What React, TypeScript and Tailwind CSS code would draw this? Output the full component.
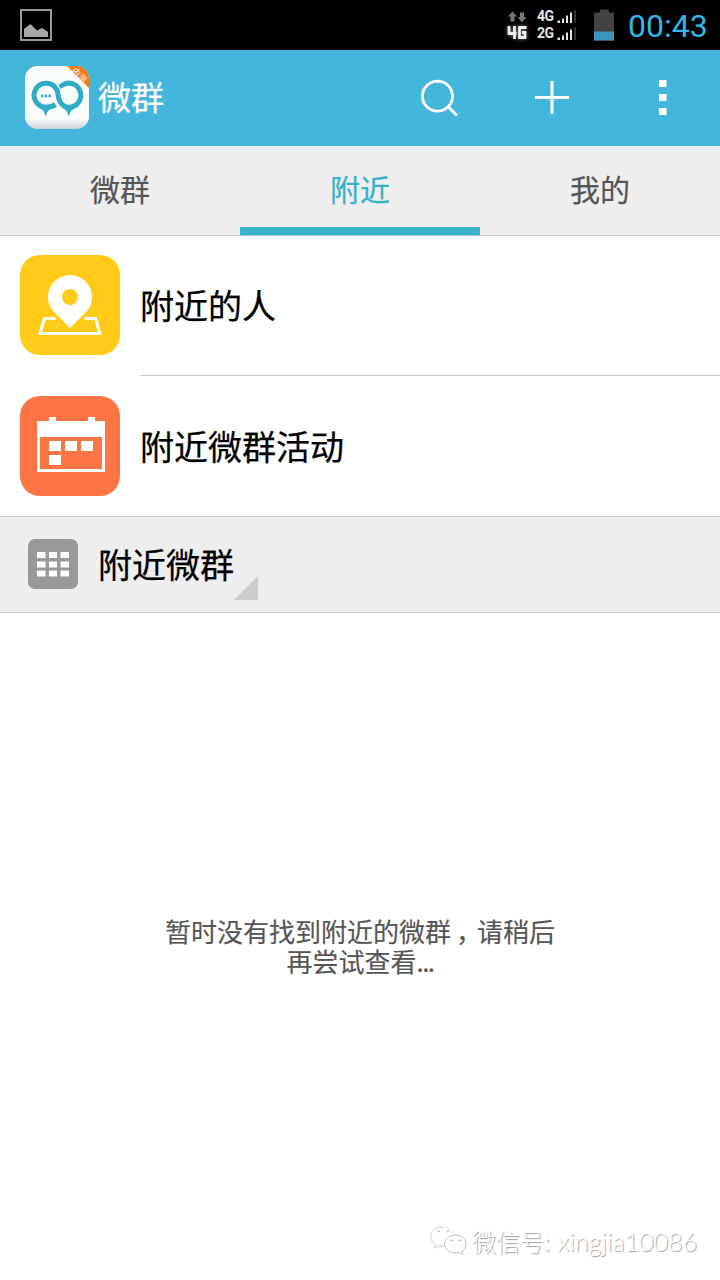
import type { ReactNode } from 'react';

const cjk = "font-['Noto_Sans_CJK_SC',sans-serif]";

function SignalBars() {
    return (
        <svg className="h-[14px] w-5" viewBox="0 0 20 14" fill="#e6e6e6">
            <rect x="0.500" y="10.500" width="2.500" height="2.500" />
            <rect x="5" y="8.500" width="2" height="4.500" />
            <rect x="9" y="5.500" width="2" height="7.500" />
            <rect x="13" y="2.500" width="2" height="10.500" />
            <rect x="17.500" y="0" width="1.200" height="13" fill="#555" />
        </svg>
    );
}

function StatusBar() {
    return (
        <div className="flex h-[50px] items-center bg-black pl-5 pr-3">
            <svg className="h-8 w-8" viewBox="0 0 32 32">
                <rect x="1" y="1" width="30" height="30" fill="none" stroke="#999" strokeWidth="2" />
                <path d="M4 28V20L10.500 15L17 21.500L22 19L28 23V28Z" fill="#a8a8a8" />
            </svg>
            <div className="ml-auto flex items-center">
                <div className="flex w-[22px] flex-col items-center">
                    <svg className="h-3 w-5" viewBox="0 0 20 12" fill="#777">
                        <path d="M5.500 0.500L10 5.500H7.500V10.500H3.500V5.500H1ZM13 1.500H17V6H19.500L15 11.500L10.500 6H13Z" />
                    </svg>
                    <svg className="mt-0.5 h-[15px] w-5 drop-shadow-[0_0_2px_#777]" viewBox="0 0 20 15" fill="none" stroke="#eee" strokeWidth="2.800">
                        <path d="M2 1V8.500H9.500M7.500 1V14M19.500 2.500H12.500V12.500H18V7.500H15" />
                    </svg>
                </div>
                <div className="ml-[9px] flex flex-col font-['Roboto',sans-serif] text-[14px] font-bold leading-[17px] text-[#e6e6e6]">
                    <div className="flex items-center"><span className="w-[20px] tracking-[-0.5px]">4G</span><SignalBars /></div>
                    <div className="flex items-center"><span className="w-[20px] tracking-[-0.5px]">2G</span><SignalBars /></div>
                </div>
                <svg className="ml-[17px] h-8 w-5" viewBox="0 0 20 32">
                    <path d="M0 3.500H6V0.500H15V3.500H20V31.500H0Z" fill="#424242" />
                    <rect y="22.500" width="20" height="9" fill="#3a96bd" />
                </svg>
                <span className="ml-[14px] w-20 whitespace-nowrap pt-[3px] font-['Roboto',sans-serif] text-[32px] leading-[47px] text-[#33b5e5]">00:43</span>
            </div>
        </div>
    );
}

function Logo() {
    return (
        <svg className="h-16 w-16" viewBox="0 0 64 64">
            <defs>
                <linearGradient id="logo-bg" x1="0" y1="0" x2="0" y2="1">
                    <stop offset="0.84" stopColor="#f8fcff" />
                    <stop offset="1" stopColor="#c9d3d6" />
                </linearGradient>
                <clipPath id="logo-clip"><rect y="0" width="64" height="63" rx="12.500" /></clipPath>
            </defs>
            <g clipPath="url(#logo-clip)">
                <rect width="64" height="63" fill="url(#logo-bg)" />
                <path d="M42 0H64V22Z" fill="#f9770e" />
                <text x="54" y="12" transform="rotate(45 54 9.500)" textAnchor="middle" fontSize="8.500" fill="#fff" className="font-['Noto_Sans_CJK_SC',sans-serif]">内测</text>
            </g>
            <path d="M30.500 38.700C27 41 23 41.200 20.800 41.200A12 12 0 1 1 31.500 23.200C34 27.500 32.500 31 34.800 35C36.800 39.500 40 41.200 43.800 41.200A12 12 0 1 0 37.500 19L34.500 21" fill="none" stroke="#30acc5" strokeWidth="5" strokeLinejoin="round" />
            <path d="M13.500 41.500Q19 43 20.700 50.500Q22.500 43 28.500 41.500ZM36.500 41.500Q42 43 43.800 50.500Q45.500 43 51 41.500Z" fill="#30acc5" />
            <g fill="#30acc5">
                <circle cx="17.300" cy="30" r="1.400" />
                <circle cx="21" cy="30" r="1.400" />
                <circle cx="24.700" cy="30" r="1.400" />
            </g>
        </svg>
    );
}

function AppBar() {
    return (
        <header className="flex h-24 items-center bg-[#45b6db] pl-[25px] pr-[53px]">
            <Logo />
            <h1 className={`ml-[9px] pb-[5px] text-[33px] leading-[48px] text-white [-webkit-text-stroke:0.2px] ${cjk}`}>微群</h1>
            <div className="ml-auto flex items-center">
                <svg className="h-10 w-10" viewBox="0 0 40 40" fill="none" stroke="#fff" strokeWidth="2.800">
                    <circle cx="17.500" cy="18.200" r="15" />
                    <path d="M28 28.500L37 37.500" />
                </svg>
                <svg className="ml-[75px] h-[34px] w-[34px]" viewBox="0 0 34 34" stroke="#fff" strokeWidth="3">
                    <path d="M0 16.500H34M17 0V33" />
                </svg>
                <svg className="ml-[90px] h-9 w-2" viewBox="0 0 8 36" fill="#fff">
                    <path d="M0 0H7.500V7H0ZM0 14H7.500V21H0ZM0 28H7.500V35H0Z" />
                </svg>
            </div>
        </header>
    );
}

function Tabs() {
    const tabs = ['微群', '附近', '我的'];
    const active = '附近';
    return (
        <nav className="grid h-[90px] grid-cols-3 border-b border-[#c9c9c9] bg-[#eee]">
            {tabs.map((tab) => (
                <div key={tab} className={`flex justify-center border-b-8 pt-5 text-[30px] leading-[44px] [-webkit-text-stroke:0.2px] ${tab === active ? 'border-[#35b3c9] text-[#35b3c9]' : 'border-transparent text-[#555]'}`}>{tab}</div>
            ))}
        </nav>
    );
}

function NearbyRow({ icon, label, className }: { icon: ReactNode; label: string; className: string }) {
    return (
        <div className="flex pl-5">
            <div className="flex items-center">{icon}</div>
            <div className={`ml-5 flex flex-1 items-center text-[34px] leading-[50px] text-black [-webkit-text-stroke:0.25px] ${className}`}>{label}</div>
        </div>
    );
}

function PinIcon() {
    return (
        <svg className="h-[100px] w-[100px]" viewBox="0 0 100 100">
            <rect width="100" height="100" rx="20" fill="#ffcb18" />
            <path d="M35.500 63.500H24.500L20 78.500H80L75.500 63.500H64.500" fill="none" stroke="#fff" strokeWidth="3" />
            <path d="M50 73L34 57C30 53 28 48 28 42A22 22 0 0 1 72 42C72 48 70 53 66 57Z" fill="#fff" />
            <circle cx="50" cy="42" r="8" fill="#ffcb18" />
        </svg>
    );
}

function CalendarIcon() {
    return (
        <svg className="h-[100px] w-[100px]" viewBox="0 0 100 100">
            <rect width="100" height="100" rx="20" fill="#fd7545" />
            <path d="M17 25H29V21H36V25H68V21H75V25H85V76H17Z" fill="#fff" />
            <path d="M20 41H82V73H20Z" fill="#fd7545" />
            <path d="M29 45H41V55H29ZM45 45H57V55H45ZM61 45H73V55H61ZM29 59H41V69H29Z" fill="#fff" />
        </svg>
    );
}

function GroupHeader() {
    return (
        <div className="flex h-[97px] border-y border-[#c9c9c9] bg-[#eee] pl-7">
            <svg className="mt-[22px] h-[50px] w-[50px]" viewBox="0 0 50 50">
                <rect width="50" height="50" rx="7" fill="#999" />
                <path d="M9 13H17.500V19H9ZM21 13H29V19H21ZM32.500 13H41V19H32.500ZM9 22.500H17.500V28.500H9ZM21 22.500H29V28.500H21ZM32.500 22.500H41V28.500H32.500ZM9 31.500H17.500V37.500H9ZM21 31.500H29V37.500H21ZM32.500 31.500H41V37.500H32.500Z" fill="#fff" />
            </svg>
            <span className="ml-5 mt-[22px] text-[34px] leading-[50px] text-black [-webkit-text-stroke:0.25px]">附近微群</span>
            <svg className="mt-[59px] h-6 w-6" viewBox="0 0 24 24"><path d="M24 0V24H0Z" fill="#ccc" /></svg>
        </div>
    );
}

function Watermark() {
    return (
        <div className="flex items-center justify-end pr-[23px]">
            <svg className="h-[30px] w-[37px]" viewBox="0 0 37 30">
                <path d="M12.500 1C5.500 1 0.700 5.500 0.700 11C0.700 14 2.500 16.500 5.500 18.500L4.500 22L9 20L14 20.500" fill="#fff" stroke="#c4c4c4" strokeWidth="0.800" />
                <path d="M12.500 1C19 1 23.500 4 25 9" fill="none" stroke="#ddd" strokeWidth="0.600" />
                <path d="M25.500 9C19 9 14.500 13 14.500 18C14.500 23 19 27 25.500 27L29 26.500L33 28.500L32 25C35 23 36 21 36 18C36 13 32 9 25.500 9Z" fill="#fff" stroke="#bbb" strokeWidth="0.900" />
                <path d="M7 6Q8.500 3.500 10 6M16.500 6Q18 3.500 19.500 6M20 15Q21.500 12.500 23 15M28 15Q29.500 12.500 31 15" fill="none" stroke="#aaa" />
            </svg>
            <div className="ml-[5px] flex w-[225px] items-center justify-between whitespace-nowrap text-white [text-shadow:1px_1px_1px_#999]">
                <span className="text-[24px] font-light leading-9">微信号:</span>
                <span className="font-['Lato','Noto_Sans_CJK_SC',sans-serif] text-[25px] font-light leading-9">xingjia10086</span>
            </div>
        </div>
    );
}

export default function App() {
    return (
        <div className={`flex h-[1280px] w-[720px] flex-col overflow-hidden bg-white ${cjk}`}>
            <StatusBar />
            <AppBar />
            <Tabs />
            <NearbyRow icon={<div className="pb-[2px]"><PinIcon /></div>} label="附近的人" className="h-[140px] border-b border-[#ccc] pb-[2px]" />
            <NearbyRow icon={<CalendarIcon />} label="附近微群活动" className="h-[140px]" />
            <GroupHeader />
            <p className="flex-1 pt-[303px] text-center text-[26px] leading-[30px] text-[#555] [-webkit-text-stroke:0.15px]">
                暂时没有找到附近的微群<span className="inline-block w-[26px] indent-[5px]">，</span>请稍后
                <br />
                再尝试查看<span className="tracking-[-1.5px]">...</span>
            </p>
            <div className="pb-[21px]"><Watermark /></div>
        </div>
    );
}
